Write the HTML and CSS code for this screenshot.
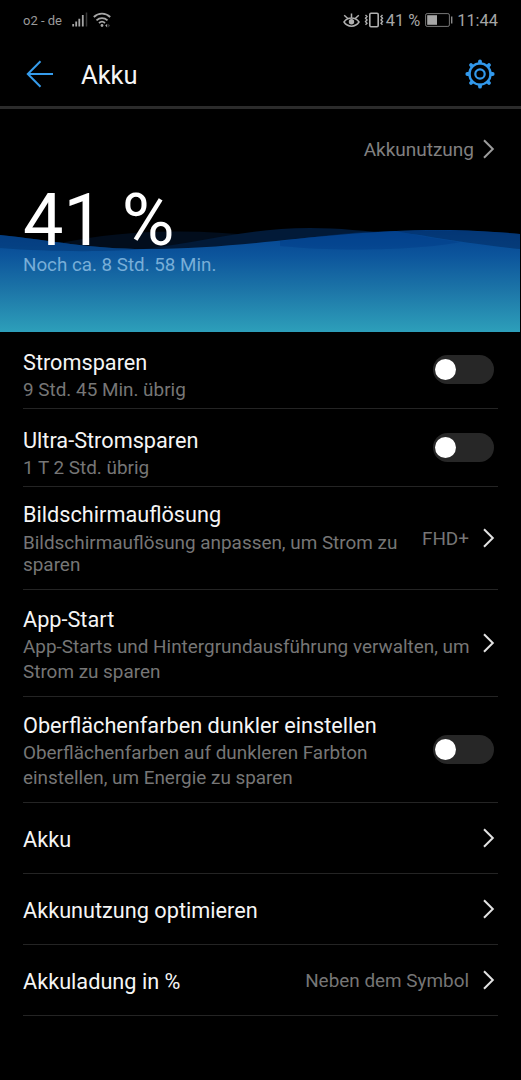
FILE: index.html
```html
<!DOCTYPE html>
<html lang="de">
<head>
    <meta charset="UTF-8">
    <meta name="viewport" content="width=device-width, initial-scale=1.0">
    <title>Akku</title>
    <link rel="stylesheet" href="styles.css">
</head>
<body>
    <svg class="sprite" aria-hidden="true">
        <symbol id="chevron" viewBox="0 0 12 20">
            <path d="M1 1.2L9.8 10L1 18.8" fill="none" stroke="currentColor" stroke-width="2"/>
        </symbol>
    </svg>

    <div class="phone">
        <div class="status-bar">
            <span class="carrier">o2 - de</span>
            <svg class="signal" width="17" height="16" viewBox="0 0 17 16">
                <path d="M1.2 12v2.5M4.2 9.5v5M7.3 6.8v7.7M10.8 3v11.5" stroke="#a6a6a6" stroke-width="1.8"/>
                <path d="M14.5 .5v14" stroke="#3a3a3a" stroke-width="1.5"/>
            </svg>
            <svg class="wifi" width="18" height="16" viewBox="0 0 18 16">
                <path d="M.8 5C5.5 .4 12.5 .4 17.2 5M3.5 8.3C6.7 5.3 11.3 5.3 14.5 8.3M6 11C7.7 9.5 10.3 9.5 12 11" fill="none" stroke="#a6a6a6" stroke-width="1.8"/>
                <circle cx="9" cy="13.5" r="1.4" fill="#a6a6a6"/>
                <path d="M14.2 11.8v3.6l-2-1.8z" fill="#a6a6a6"/>
                <path d="M15.2 11.8v3.6l2-1.8z" fill="#3c3c3c"/>
            </svg>
            <span class="spacer"></span>
            <svg class="eye" width="17" height="15" viewBox="0 0 17 15">
                <path d="M1 9C4.5 3.8 12.5 3.8 16 9C12.5 14.5 4.5 14.5 1 9zM8.5 4.5V.5M4.5 5.2L1.2 2.2M12.5 5.2L15.8 2.2" fill="none" stroke="#b0b0b0" stroke-width="1.5"/>
                <circle cx="8.5" cy="8.8" r="2.7" fill="#b0b0b0"/>
            </svg>
            <svg class="vibrate" width="20" height="16" viewBox="0 0 20 16">
                <rect x="5.8" y="1.3" width="8.4" height="13.4" rx="1.2" fill="none" stroke="#b0b0b0" stroke-width="1.6"/>
                <path d="M1.5 3l1.5 1.5-1.5 1.7 1.5 1.7-1.5 1.7 1.5 1.7-1.5 1.5M18.5 3L17 4.5l1.5 1.7L17 7.9l1.5 1.7-1.5 1.7 1.5 1.5" fill="none" stroke="#b0b0b0" stroke-width="1.4"/>
            </svg>
            <span class="percent">41 %</span>
            <svg class="battery" width="28" height="14" viewBox="0 0 28 14">
                <rect x=".6" y=".6" width="23.8" height="12.8" rx="1.5" fill="none" stroke="#777" stroke-width="1"/>
                <rect x="2.2" y="2.2" width="9.8" height="9.6" fill="#a6a6a6"/>
                <path d="M26.7 3.5v7" stroke="#8a8a8a" stroke-width="1.4"/>
            </svg>
            <span class="clock">11:44</span>
        </div>

        <div class="header">
            <svg class="back" width="28" height="28" viewBox="0 0 28 28">
                <path d="M27 14H2M14.5 1.2L1.8 14l12.7 12.8" fill="none" stroke="#369cec" stroke-width="2"/>
            </svg>
            <h1>Akku</h1>
            <svg class="gear" width="30" height="30" viewBox="0 0 30 30">
                <g fill="none" stroke="#3299ec">
                    <circle cx="15" cy="15" r="10.6" stroke-width="2.4"/>
                    <circle cx="15" cy="15" r="4.7" stroke-width="2.2"/>
                    <path d="M15 2.3v1.4M15 26.3v1.4M2.3 15h1.4M26.3 15h1.4M6 6l1 1M23 23l1 1M6 24l1-1M23 7l1-1" stroke-width="3.8" stroke-linecap="round"/>
                </g>
            </svg>
        </div>

        <div class="hero">
            <svg class="waves" width="520" height="106" viewBox="0 0 520 106">
                <defs>
                    <linearGradient id="water" gradientUnits="userSpaceOnUse" x1="0" y1="4" x2="0" y2="106">
                        <stop offset="0" stop-color="#044491"/>
                        <stop offset=".25" stop-color="#0c559c"/>
                        <stop offset=".6" stop-color="#1d76a8"/>
                        <stop offset="1" stop-color="#2d9fba"/>
                    </linearGradient>
                </defs>
                <path d="M60 17C100 9 140 5 180 5.500C270 6 350 24 420 26H60z" fill="#020d1c"/>
                <path d="M130 24C190 20 240 2 310 2C370 2 420 14 520 23V30H130z" fill="#021a38"/>
                <path d="M0 9C50 14 90 23 145 23C250 23 330 4 440 4C470 4 500 6 520 8V106H0z" fill="url(#water)"/>
                <path d="M0 9C50 14 90 23 145 23C110 26 50 26 0 22z" fill="#02306b" opacity=".45"/>
                <path d="M395 5C440 3 490 5 520 8V23C480 19 430 11 395 5z" fill="#02285a" opacity=".5"/>
                <path d="M280 15C330 9 360 5 395 5C420 10 445 14 460 16C420 24 340 26 280 20z" fill="#003a85" opacity=".4"/>
            </svg>
            <a class="usage-link" href="#">
                <span>Akkunutzung</span>
                <svg class="chevron"><use href="#chevron"/></svg>
            </a>
            <div class="level">41 %</div>
            <div class="remaining">Noch ca. 8 Std. 58 Min.</div>
        </div>

        <div class="list">
            <div class="row row-power">
                <div class="text">
                    <h2>Stromsparen</h2>
                    <p>9 Std. 45 Min. übrig</p>
                </div>
                <span class="toggle"></span>
            </div>
            <div class="row row-ultra">
                <div class="text">
                    <h2>Ultra-Stromsparen</h2>
                    <p>1 T 2 Std. übrig</p>
                </div>
                <span class="toggle"></span>
            </div>
            <div class="row row-resolution">
                <div class="text">
                    <h2>Bildschirmauflösung</h2>
                    <p>Bildschirmauflösung anpassen, um Strom zu<br>sparen</p>
                </div>
                <span class="value">FHD+</span>
                <svg class="chevron"><use href="#chevron"/></svg>
            </div>
            <div class="row row-start">
                <div class="text">
                    <h2>App-Start</h2>
                    <p>App-Starts und Hintergrundausführung verwalten, um<br>Strom zu sparen</p>
                </div>
                <svg class="chevron"><use href="#chevron"/></svg>
            </div>
            <div class="row row-dark">
                <div class="text">
                    <h2>Oberflächenfarben dunkler einstellen</h2>
                    <p>Oberflächenfarben auf dunkleren Farbton<br>einstellen, um Energie zu sparen</p>
                </div>
                <span class="toggle"></span>
            </div>
            <div class="row">
                <div class="text">
                    <h2>Akku</h2>
                </div>
                <svg class="chevron"><use href="#chevron"/></svg>
            </div>
            <div class="row">
                <div class="text">
                    <h2>Akkunutzung optimieren</h2>
                </div>
                <svg class="chevron"><use href="#chevron"/></svg>
            </div>
            <div class="row">
                <div class="text">
                    <h2>Akkuladung in %</h2>
                </div>
                <span class="value">Neben dem Symbol</span>
                <svg class="chevron"><use href="#chevron"/></svg>
            </div>
        </div>
    </div>
</body>
</html>
```
FILE: styles.css
```css
* {
    margin: 0;
    padding: 0;
    box-sizing: border-box;
}

body {
    font-family: Roboto, sans-serif;
    background: #000;
    color: #f5f5f5;
}

.sprite {
    display: none;
}

.phone {
    width: 521px;
    height: 1080px;
    overflow: hidden;
    white-space: nowrap;
}

.status-bar {
    display: flex;
    align-items: center;
    height: 40px;
    padding: 0 23px;
    color: #a6a6a6;
}

.carrier {
    font-size: 13px;
    color: #9a9a9a;
}

.signal {
    margin-left: 10px;
}

.wifi {
    margin-left: 4px;
}

.spacer {
    flex: 1;
}

.vibrate {
    margin-left: 4px;
}

.percent {
    font-size: 16.4px;
    margin-left: 2px;
}

.battery {
    margin-left: 5px;
}

.clock {
    font-size: 16.4px;
    margin-left: 4px;
}

.header {
    display: flex;
    align-items: center;
    height: 69px;
    padding: 2px 26px 0 26px;
    border-bottom: 3px solid #2b2b2b;
}

.header h1 {
    flex: 1;
    font-size: 25.5px;
    font-weight: 400;
    margin-left: 27px;
    padding-top: 1px;
}

.hero {
    position: relative;
    height: 223px;
    padding: 26px 26px 0 23px;
}

/* water surface behind the charge level */
.waves {
    position: absolute;
    left: 0;
    bottom: 0;
}

.usage-link {
    display: flex;
    justify-content: flex-end;
    align-items: center;
    height: 28px;
    color: #808080;
    font-size: 19px;
    text-decoration: none;
}

.usage-link .chevron {
    margin-left: 9px;
    color: #9c9c9c;
}

.level {
    position: relative;
    font-size: 72px;
    line-height: 60px;
    color: #fff;
    margin-top: 28px;
}

.remaining {
    position: relative;
    font-size: 18.8px;
    line-height: 24px;
    color: #78aed8;
    margin-top: 2px;
}

.chevron {
    width: 12px;
    height: 20px;
    flex: none;
    color: #e2e2e2;
}

.list {
    padding: 0 23px;
}

.row {
    display: flex;
    align-items: center;
    height: 71px;
    padding-right: 3px;
    border-bottom: 1px solid #242424;
}

.text {
    flex: 1;
    align-self: flex-start;
    padding-top: 23px;
}

.text h2 {
    font-size: 21.7px;
    line-height: 27px;
    font-weight: 400;
}

.text p {
    font-size: 18.9px;
    line-height: 24.6px;
    margin-top: 2px;
    color: #767676;
}

.row-power {
    height: 77px;
}

.row-ultra {
    height: 78px;
}

.row-power .text {
    padding-top: 17px;
}

.row-ultra .text {
    padding-top: 18px;
}

.row-resolution {
    height: 103px;
}

.row-resolution .text {
    padding-top: 14px;
}

.row-resolution p {
    line-height: 22.3px;
    margin-top: 4px;
}

.row-start {
    height: 107px;
}

.row-dark {
    height: 106px;
}

.row-start .text {
    padding-top: 16px;
}

.row-dark .text {
    padding-top: 15px;
}

.value {
    font-size: 18.9px;
    color: #767676;
    margin-right: 14px;
}

.toggle {
    flex: none;
    width: 61px;
    height: 29px;
    padding: 4px 2px;
    margin-right: 1px;
    margin-bottom: 1px;
    border-radius: 15px;
    background: #272727;
}

.toggle::before {
    content: "";
    display: block;
    width: 21px;
    height: 21px;
    border-radius: 50%;
    background: #fff;
}
```
